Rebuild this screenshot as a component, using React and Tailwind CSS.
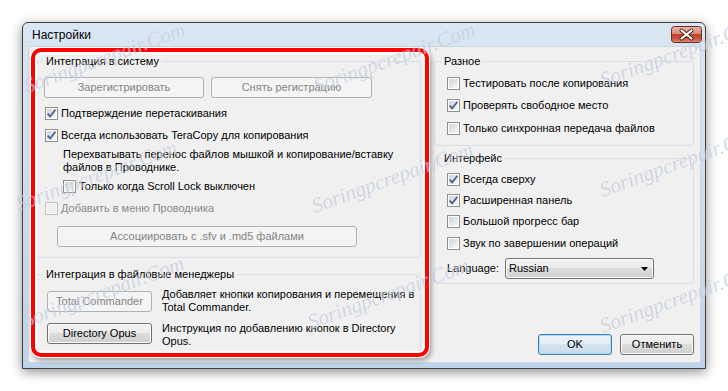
import React from 'react';

const btnNormal =
  'border-[#707070] text-black bg-[linear-gradient(#f2f2f2,#ebebeb_50%,#dddddd_50%,#cfcfcf)] shadow-[inset_0_0_0_1px_#fcfcfc]';
const btnDisabled = 'border-[#adb2b5] text-[#838383] bg-[#f4f4f4]';
const btnDefault =
  'border-[#3c7fb1] text-black bg-[linear-gradient(#eef5fb,#e2edf6_50%,#d4e3f0_50%,#c9dbeb)] shadow-[inset_0_0_0_1px_#a9dcf6]';

const Btn = ({ children, disabled, primary, className = '' }) => {
  const skin = disabled ? btnDisabled : primary ? btnDefault : btnNormal;
  return (
    <div className={`flex h-[21px] shrink-0 items-center justify-center rounded-[3px] border ${skin} ${className}`}>
      {children}
    </div>
  );
};

// чекбокс в стиле Windows 7
const Check = ({ checked, disabled }) => (
  <span
    className={`flex h-[13px] w-[13px] shrink-0 items-center justify-center border p-[1px] ${
      disabled ? 'border-[#c2c2c2] bg-[#f7f7f7]' : 'border-[#8e8f8f] bg-white'
    }`}
  >
    <span
      className={`flex h-[9px] w-[9px] items-center justify-center ${
        disabled ? 'bg-[#f0f0f0]' : 'bg-gradient-to-br from-[#cfd3d8] to-[#f8f8f8]'
      }`}
    >
      {checked && (
        <svg width="11" height="11" viewBox="0 0 11 11" className="overflow-visible">
          <path d="M1.6 5.6 L4.2 8.4 L9.4 1.8" fill="none" stroke="#4a5f8f" strokeWidth="1.7" />
        </svg>
      )}
    </span>
  </span>
);

const CheckRow = ({ label, checked, disabled, className = '' }) => (
  <div className={`flex h-[13px] items-center gap-[3px] ${className}`}>
    <Check checked={checked} disabled={disabled} />
    <span className={`whitespace-nowrap ${disabled ? 'text-[#8a8a8a]' : ''}`}>{label}</span>
  </div>
);

const CloseButton = () => (
  <svg width="31" height="17" viewBox="0 0 31 17">
    <defs>
      <linearGradient id="closeGrad" x1="0" y1="0" x2="0" y2="1">
        <stop offset="0" stopColor="#eab5a8" />
        <stop offset="0.45" stopColor="#d98b79" />
        <stop offset="0.5" stopColor="#c2432d" />
        <stop offset="0.75" stopColor="#c9533c" />
        <stop offset="1" stopColor="#dd907b" />
      </linearGradient>
    </defs>
    <rect x="0.5" y="0.5" width="30" height="16" rx="3" fill="url(#closeGrad)" stroke="#6b2b22" />
    <path d="M10.5 4.5 L20.5 12.5 M20.5 4.5 L10.5 12.5" stroke="#4b2018" strokeWidth="4" strokeLinecap="round" />
    <path d="M10.5 4.5 L20.5 12.5 M20.5 4.5 L10.5 12.5" stroke="#ffffff" strokeWidth="2.2" strokeLinecap="round" />
  </svg>
);

// рамка группы; отступы содержимого задаются на внутреннем div,
// чтобы легенда не сдвигалась вместе с паддингом fieldset
const Group = ({ title, className = '', bodyClass = '', children }) => (
  <fieldset className={`rounded-[3px] border border-[#d5dfe5] ${className}`}>
    <legend className="ml-[6px] px-[3px] leading-[13px]">{title}</legend>
    <div className={bodyClass}>{children}</div>
  </fieldset>
);

// полупрозрачный водяной знак сайта поверх скриншота
const Mark = ({ className }) => (
  <span
    className={`pointer-events-none absolute origin-bottom-left -rotate-[20deg] whitespace-nowrap font-['Liberation_Serif',serif] text-[21px] italic leading-[21px] text-[rgba(140,152,192,0.38)] [text-shadow:0_0_1px_rgba(255,255,255,0.6)] ${className}`}
  >
    Soringpcrepair.Com
  </span>
);

export default function App() {
  return (
    <div className="relative h-[391px] w-[728px] overflow-hidden bg-white pl-[22px] pt-[22px] font-['Liberation_Sans',Arial,sans-serif] text-[11px] leading-[13px] text-black">
      {/* окно */}
      <div className="flex h-[347px] w-[684px] flex-col rounded-t-[6px] border border-[#3f3f3f] bg-gradient-to-b from-[#dbe6f3] to-[#bed4ea] shadow-[0_3px_12px_rgba(0,0,0,0.45)]">
        {/* заголовок */}
        <div className="flex h-[23px] shrink-0 items-center justify-between pl-[9px] pr-[3px]">
          <span className="pt-[2px] text-[12px]">Настройки</span>
          <CloseButton />
        </div>

        {/* клиентская область */}
        <div className="relative mb-[5px] ml-[5px] mr-[4px] flex flex-1 border border-[#cdd7e2] bg-[#f0f0f0] pb-[7px] pl-[7px] pr-[6px] pt-[8px]">
          {/* левая колонка */}
          <div className="flex w-[385px] shrink-0 flex-col">
            <Group title="Интеграция в систему" bodyClass="px-[7px] pb-[10px]">
              <div className="mt-[9px] flex gap-[7px]">
                <Btn disabled className="w-[160px]">Зарегистрировать</Btn>
                <Btn disabled className="w-[161px]">Снять регистрацию</Btn>
              </div>
              <CheckRow className="ml-[1px] mt-[9px]" checked label="Подтверждение перетаскивания" />
              <CheckRow className="ml-[1px] mt-[9px]" checked label="Всегда использовать TeraCopy для копирования" />
              <p className="ml-[19px] mt-[6px]">
                Перехватывать перенос файлов мышкой и копирование/вставку
                <br />
                файлов в Проводнике.
              </p>
              <CheckRow className="ml-[19px] mt-[6px]" label="Только когда Scroll Lock выключен" />
              <CheckRow className="ml-[1px] mt-[9px]" disabled label="Добавить в меню Проводника" />
              <Btn disabled className="ml-[13px] mt-[11px] w-[300px]">
                Ассоциировать с .sfv и .md5 файлами
              </Btn>
            </Group>

            <Group title="Интеграция в файловые менеджеры" className="mt-[10px]" bodyClass="pb-[3px] pl-[10px]">
              <div className="mt-[7px] flex items-start">
                <Btn disabled className="mt-[3px] w-[105px]">Total Commander</Btn>
                <p className="ml-[10px]">
                  Добавляет кнопки копирования и перемещения в
                  <br />
                  Total Commander.
                </p>
              </div>
              <div className="mt-[8px] flex items-start">
                <Btn className="mt-[1px] w-[105px]">Directory Opus</Btn>
                <p className="ml-[10px]">
                  Инструкция по добавлению кнопок в Directory
                  <br />
                  Opus.
                </p>
              </div>
            </Group>
          </div>

          {/* правая колонка */}
          <div className="ml-[13px] flex w-[260px] shrink-0 flex-col">
            <Group title="Разное" bodyClass="pb-[10px] pl-[12px]">
              <CheckRow className="mt-[9px]" label="Тестировать после копирования" />
              <CheckRow className="mt-[9px]" checked label="Проверять свободное место" />
              <CheckRow className="mt-[10px]" label="Только синхронная передача файлов" />
            </Group>

            <Group title="Интерфейс" className="mt-[6px]" bodyClass="pb-[4px] pl-[12px]">
              <CheckRow className="mt-[8px]" checked label="Всегда сверху" />
              <CheckRow className="mt-[8px]" checked label="Расширенная панель" />
              <CheckRow className="mt-[8px]" label="Большой прогресс бар" />
              <CheckRow className="mt-[9px]" label="Звук по завершении операций" />
              <div className="mt-[8px] flex h-[21px] items-center">
                <span className="w-[58px]">Language:</span>
                <div className={`flex h-[21px] w-[149px] items-center justify-between rounded-[3px] border pl-[3px] pr-[5px] ${btnNormal}`}>
                  <span>Russian</span>
                  <svg width="7" height="4" viewBox="0 0 7 4">
                    <path d="M0 0 H7 L3.5 4 Z" fill="#000" />
                  </svg>
                </div>
              </div>
            </Group>

            <div className="mt-auto flex justify-end gap-[8px]">
              <Btn primary className="w-[74px]">OK</Btn>
              <Btn className="w-[74px]">Отменить</Btn>
            </div>
          </div>

          {/* красная рамка-выделение поверх левой колонки */}
          <div className="pointer-events-none absolute left-[2px] top-[1px] h-[309px] w-[398px] rounded-[10px] border-4 border-[#ff0000] shadow-[0_0_0_1px_#ffffff,inset_0_0_0_2px_#ffffff,2px_3px_4px_1px_rgba(0,0,0,0.3)]" />
        </div>
      </div>

      {/* водяные знаки */}
      <Mark className="left-[28px] top-[76px]" />
      <Mark className="left-[318px] top-[76px]" />
      <Mark className="left-[604px] top-[70px]" />
      <Mark className="left-[20px] top-[194px]" />
      <Mark className="left-[316px] top-[196px]" />
      <Mark className="left-[604px] top-[180px]" />
      <Mark className="left-[27px] top-[310px]" />
      <Mark className="left-[312px] top-[312px]" />
      <Mark className="left-[604px] top-[316px]" />
    </div>
  );
}
